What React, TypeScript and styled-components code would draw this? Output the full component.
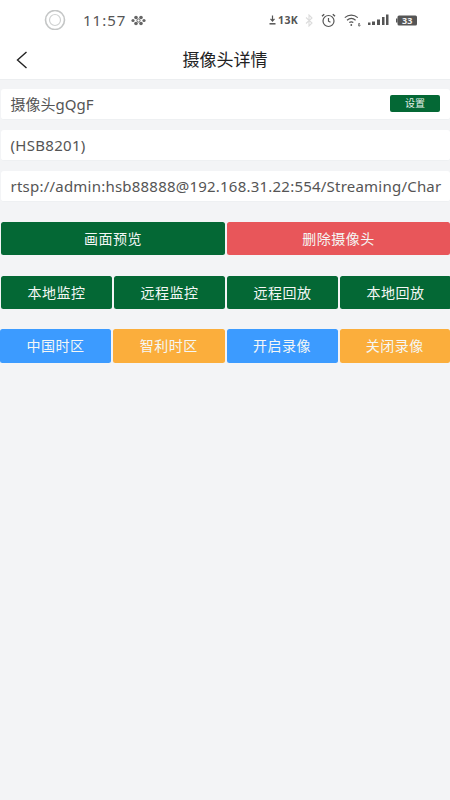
import React from 'react';
import styled, { createGlobalStyle } from 'styled-components';

const GlobalStyle = createGlobalStyle`
  html, body {
    margin: 0;
    padding: 0;
    background: #f3f4f6;
    font-family: "Noto Sans", "Noto Sans CJK SC", sans-serif;
  }
  * { box-sizing: border-box; }
`;

const Page = styled.div`
  width: 450px;
  height: 800px;
  overflow: hidden;
  background: #f3f4f6;
`;

const StatusBar = styled.div`
  height: 40px;
  background: #fff;
  display: flex;
  align-items: center;
  padding: 0 33px 0 44px;
  color: #555;
`;

const Time = styled.span`
  margin-left: 17px;
  font-size: 15px;
  font-weight: 400;
  letter-spacing: 1px;
  color: #555;
`;

const StatusRight = styled.div`
  margin-left: auto;
  display: flex;
  align-items: center;
`;

const NetSpeed = styled.span`
  font-size: 10.5px;
  font-weight: 700;
  letter-spacing: 0.3px;
  color: #555;
  margin-left: 2px;
  margin-right: 7px;
`;

const Header = styled.div`
  height: 40px;
  background: #fff;
  border-bottom: 1px solid #eceef0;
  display: flex;
  align-items: center;
  justify-content: center;
  position: relative;
`;

const BackIcon = styled.svg`
  position: absolute;
  left: 15px;
  top: 11px;
`;

const Title = styled.h1`
  margin: 0;
  font-size: 17px;
  font-weight: 400;
  color: #222;
  line-height: 38px;
`;

const Content = styled.div`
  padding: 9px 0 0 1px;
`;

const InfoRow = styled.div<{ $track?: number }>`
  height: 31px;
  margin-bottom: 10px;
  background: #fff;
  border-radius: 3px;
  border-bottom: 1px solid #eef0f2;
  display: flex;
  align-items: center;
  justify-content: space-between;
  padding: 0 10px 1px 9.5px;
  font-size: 15px;
  letter-spacing: ${(p) => p.$track ?? 0}px;
  color: #555;
  white-space: nowrap;
  overflow: hidden;
`;

const SetButton = styled.button`
  width: 50px;
  height: 17px;
  padding: 0;
  border: 0;
  border-radius: 2px;
  background: #046835;
  color: #e4f0e9;
  font-family: inherit;
  font-size: 10px;
  line-height: 17px;
`;

const ButtonRow = styled.div<{ $top: number; $left?: number; $cols: string }>`
  display: grid;
  grid-template-columns: ${(p) => p.$cols};
  gap: 2px;
  margin-top: ${(p) => p.$top}px;
  margin-left: ${(p) => p.$left ?? 0}px;
`;

const ActionButton = styled.button<{ $bg: string; $h: number }>`
  height: ${(p) => p.$h}px;
  padding: 0 0 2px;
  border: 0;
  border-radius: 2.5px;
  background: ${(p) => p.$bg};
  color: #f4f7f5;
  font-family: inherit;
  font-size: 14px;
  letter-spacing: 0.5px;
`;

const GREEN = '#046835';
const RED = '#e8565a';
const BLUE = '#3c9bff';
const ORANGE = '#fbae3c';

const Knot = () => (
  <svg width="15" height="11" viewBox="0 0 15 11" style={{ marginLeft: 5 }} fill="#666">
    <circle cx="2" cy="5.5" r="1.6" />
    <circle cx="5" cy="2.5" r="1.8" />
    <circle cx="5" cy="8.5" r="1.8" />
    <circle cx="7.5" cy="5.5" r="1.6" fill="none" stroke="#666" />
    <circle cx="10" cy="2.5" r="1.8" />
    <circle cx="10" cy="8.5" r="1.8" />
    <circle cx="13" cy="5.5" r="1.6" />
  </svg>
);

const RingIcon = () => (
  <svg width="22" height="20" viewBox="0 0 22 20" fill="none">
    <circle cx="11" cy="10" r="9.5" stroke="#c4c6c6" strokeWidth="1.6" />
    <circle cx="11" cy="10" r="5.5" stroke="#cfd1d1" strokeWidth="1.2" />
  </svg>
);

const DownloadIcon = () => (
  <svg width="7" height="10" viewBox="0 0 7 10" fill="none" stroke="#555" strokeWidth="1.2">
    <path d="M3.5 0.5V5.5M1.5 3.8L3.5 6L5.5 3.8" />
    <path d="M0.5 8.8H6.5" strokeWidth="1.5" />
  </svg>
);

const BluetoothIcon = () => (
  <svg width="8" height="13" viewBox="0 0 8 13" fill="none" stroke="#dcdcdc" strokeWidth="1.1" style={{ marginRight: 8 }}>
    <path d="M1 3.5L7 9L4 12V1L7 4L1 9.5" />
  </svg>
);

const AlarmIcon = () => (
  <svg width="15" height="15" viewBox="0 0 15 15" fill="none" stroke="#555" strokeWidth="1.2" style={{ marginRight: 8 }}>
    <circle cx="7.5" cy="8" r="5.5" />
    <path d="M7.5 5V8.2L9.5 9.2" />
    <path d="M1 3.2L3.2 1.2M14 3.2L11.8 1.2" strokeWidth="1.4" />
  </svg>
);

const WifiIcon = () => (
  <svg width="17" height="13" viewBox="0 0 17 13" fill="none" stroke="#555" strokeWidth="1.2" style={{ marginRight: 7 }}>
    <path d="M0.8 3.6C4.6 0.4 10 0.4 13.8 3.6" />
    <path d="M3 6.2C5.6 4 9 4 11.6 6.2" />
    <path d="M5.3 8.6C6.6 7.6 8 7.6 9.3 8.6" />
    <circle cx="7.3" cy="11" r="0.9" fill="#555" stroke="none" />
    <path d="M16 9.5H14.6V12H16V10.8H15.2" strokeWidth="0.7" />
  </svg>
);

const SignalIcon = () => (
  <svg width="21" height="12" viewBox="0 0 21 12" fill="#555" style={{ marginRight: 7 }}>
    <rect x="0" y="8.5" width="2.5" height="2.5" />
    <rect x="4" y="7.5" width="3" height="3.5" />
    <rect x="9" y="5.5" width="3" height="5.5" />
    <rect x="14" y="3" width="2.5" height="8" />
    <rect x="18" y="0.5" width="2.5" height="10.5" />
  </svg>
);

const BatteryIcon = () => (
  <svg width="21" height="13" viewBox="0 0 21 13">
    <rect x="0" y="4.5" width="1.5" height="4" fill="#555" />
    <rect x="1.5" y="1.5" width="19.5" height="10" rx="1.5" fill="#555" />
    <text x="11.2" y="9.7" textAnchor="middle" fontSize="9" fontWeight="700" fill="#f2f2f2" fontFamily="Noto Sans, sans-serif">33</text>
  </svg>
);

const COLS_TWO = '224px 223px';
const COLS_FOUR = '111px 111px 111px 111px';
const COLS_FOUR_TZ = '111px 111.5px 111px 110.5px';

export default function App() {
  return (
    <Page>
      <GlobalStyle />
      <StatusBar>
        <RingIcon />
        <Time>11:57</Time>
        <Knot />
        <StatusRight>
          <DownloadIcon />
          <NetSpeed>13K</NetSpeed>
          <BluetoothIcon />
          <AlarmIcon />
          <WifiIcon />
          <SignalIcon />
          <BatteryIcon />
        </StatusRight>
      </StatusBar>
      <Header>
        <BackIcon width="14" height="18" viewBox="0 0 14 18" fill="none" stroke="#222" strokeWidth="1.4">
          <path d="M11.5 1L2.5 9L11.5 17" />
        </BackIcon>
        <Title>摄像头详情</Title>
      </Header>
      <Content>
        <InfoRow>
          <span>摄像头gQgF</span>
          <SetButton>设置</SetButton>
        </InfoRow>
        <InfoRow $track={0.3}>(HSB8201)</InfoRow>
        <InfoRow $track={0.22}>rtsp://admin:hsb88888@192.168.31.22:554/Streaming/Char</InfoRow>
        <ButtonRow $top={20} $cols={COLS_TWO}>
          <ActionButton $bg={GREEN} $h={33}>画面预览</ActionButton>
          <ActionButton $bg={RED} $h={33}>删除摄像头</ActionButton>
        </ButtonRow>
        <ButtonRow $top={21} $cols={COLS_FOUR}>
          <ActionButton $bg={GREEN} $h={33}>本地监控</ActionButton>
          <ActionButton $bg={GREEN} $h={33}>远程监控</ActionButton>
          <ActionButton $bg={GREEN} $h={33}>远程回放</ActionButton>
          <ActionButton $bg={GREEN} $h={33}>本地回放</ActionButton>
        </ButtonRow>
        <ButtonRow $top={20} $left={-1} $cols={COLS_FOUR_TZ}>
          <ActionButton $bg={BLUE} $h={34}>中国时区</ActionButton>
          <ActionButton $bg={ORANGE} $h={34}>智利时区</ActionButton>
          <ActionButton $bg={BLUE} $h={34}>开启录像</ActionButton>
          <ActionButton $bg={ORANGE} $h={34}>关闭录像</ActionButton>
        </ButtonRow>
      </Content>
    </Page>
  );
}
